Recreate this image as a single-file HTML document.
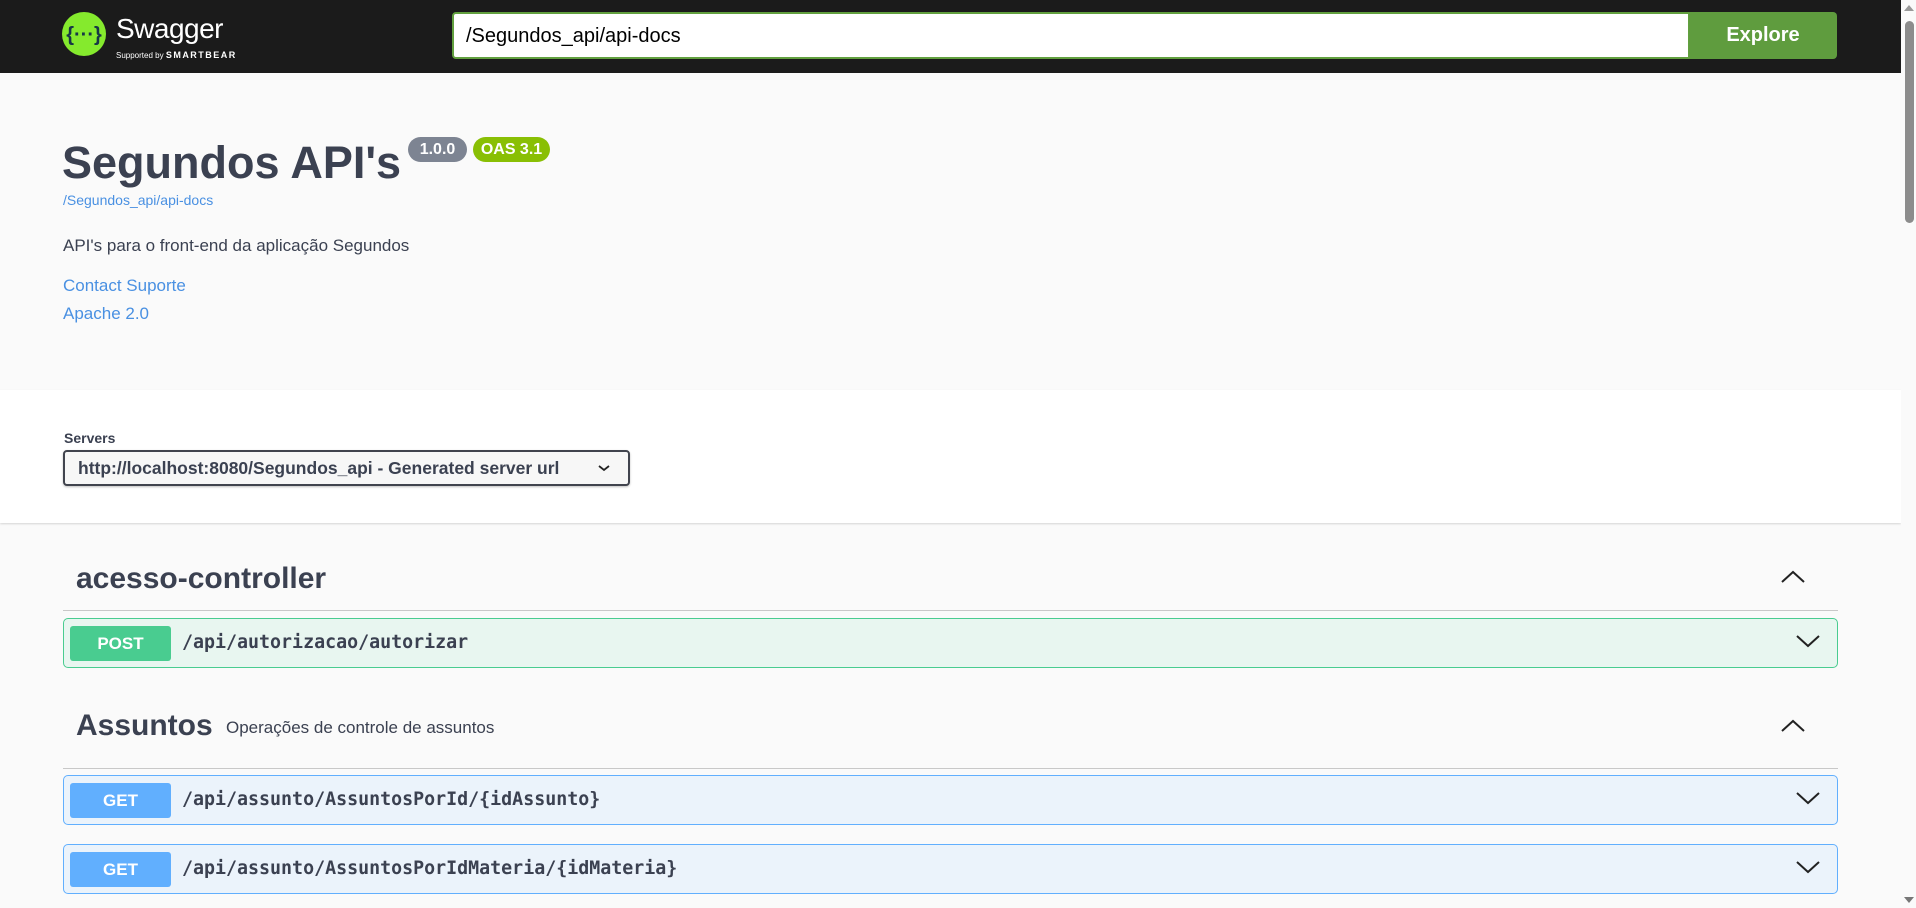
<!DOCTYPE html>
<html><head><meta charset="utf-8"><style>
*{box-sizing:border-box;margin:0;padding:0}
body{width:1916px;height:908px;overflow:hidden;background:#fafafa;font-family:"Liberation Sans",sans-serif;color:#3b4151;position:relative}
.hdr{position:absolute;left:0;top:0;width:1901px;height:73px;background:#1b1b1b}
.inp{position:absolute;left:452px;top:12px;width:1238px;height:47px;border:2px solid #62a03f;border-radius:4px 0 0 4px;background:#fff;font-size:20px;color:#000;padding:12px 12px;line-height:20px}
.btn{position:absolute;left:1689px;top:12px;width:148px;height:47px;background:#5f9c3e;border-radius:0 4px 4px 0;color:#fff;font-weight:bold;font-size:20px;text-align:center;line-height:47px}
.abs{position:absolute}
.info{position:absolute;left:0;top:73px;width:1901px;height:317px;background:#fafafa}
.srv{position:absolute;left:0;top:390px;width:1901px;height:133px;background:#fff;box-shadow:0 1px 2px rgba(0,0,0,.15)}
.a{color:#4990e2}
.badge{position:absolute;top:64px;height:25px;border-radius:13px;color:#fff;font-weight:bold;font-size:16px;line-height:25px;text-align:center}
.line{position:absolute;left:63px;width:1775px;height:1px;background:#c8c8c8}
.op{position:absolute;left:63px;width:1775px;height:50px;border-radius:5px;border:1px solid}
.m{position:absolute;left:6px;top:7px;width:101px;height:35px;border-radius:3px;color:#fff;font-weight:bold;font-size:17px;text-align:center;line-height:35px}
.p{position:absolute;left:118px;top:0;line-height:48px;font-family:"DejaVu Sans Mono","Liberation Mono",monospace;font-weight:bold;font-size:18.3px;color:#3b4151}
.chev{position:absolute;right:16px;top:15px}
h3{position:absolute;left:76px;font-size:30px;font-weight:bold;color:#3b4151}
</style></head><body>
<div class="hdr">
 <svg class="abs" style="left:62px;top:12px" width="44" height="44" viewBox="0 0 44 44"><circle cx="22" cy="22" r="22" fill="#85ea2d"/><text x="22" y="29" text-anchor="middle" font-family="Liberation Sans" font-size="20" font-weight="bold" fill="#173647">{···}</text></svg>
 <div class="abs" style="left:116px;top:13px;font-size:28px;color:#fff;letter-spacing:-0.5px">Swagger</div>
 <div class="abs" style="left:116px;top:50px;font-size:8px;color:#fff">Supported by <b style="font-size:9px;letter-spacing:1.5px">SMARTBEAR</b></div>
 <div class="inp">/Segundos_api/api-docs</div>
 <div class="btn">Explore</div>
</div>
<div class="info">
 <div class="abs" style="left:62px;top:64px;font-size:45px;font-weight:bold;color:#3b4151">Segundos API's</div>
 <div class="badge" style="left:408px;width:59px;background:#7d8492">1.0.0</div>
 <div class="badge" style="left:473px;width:77px;background:#89bf04">OAS 3.1</div>
 <div class="abs a" style="left:63px;top:119px;font-size:14px">/Segundos_api/api-docs</div>
 <div class="abs" style="left:63px;top:163px;font-size:17px">API's para o front-end da aplicação Segundos</div>
 <div class="abs a" style="left:63px;top:203px;font-size:17px">Contact Suporte</div>
 <div class="abs a" style="left:63px;top:231px;font-size:17px">Apache 2.0</div>
</div>
<div class="srv">
 <div class="abs" style="left:64px;top:40px;font-size:14px;font-weight:bold">Servers</div>
 <div class="abs" style="left:63px;top:60px;width:567px;height:36px;border:2px solid #41444e;border-radius:4px;background:#f7f7f7;box-shadow:0 1px 2px rgba(0,0,0,.25);font-size:17.5px;font-weight:bold;padding:0 0 0 13px;line-height:32px">http://localhost:8080/Segundos_api - Generated server url
  <svg class="abs" style="right:18px;top:11px" width="12" height="10" viewBox="0 0 12 10"><path d="M1 3l5 4 5-4" stroke="#222" stroke-width="1.8" fill="none"/></svg></div>
</div>
<h3 style="top:562px">acesso-controller</h3>
<svg class="abs" style="left:1780px;top:569px" width="26" height="15"><path d="M2 13L13 3l11 10" stroke="#222" stroke-width="2" fill="none"/></svg>
<div class="line" style="top:610px"></div>
<div class="op" style="top:618px;background:#e8f6f0;border-color:#49cc90"><div class="m" style="background:#49cc90">POST</div><div class="p">/api/autorizacao/autorizar</div>
 <svg class="chev" width="26" height="15"><path d="M2 2l11 10 11-10" stroke="#222" stroke-width="2" fill="none"/></svg></div>
<h3 style="top:709px">Assuntos</h3>
<div class="abs" style="left:226px;top:718px;font-size:17px">Operações de controle de assuntos</div>
<svg class="abs" style="left:1780px;top:718px" width="26" height="15"><path d="M2 13L13 3l11 10" stroke="#222" stroke-width="2" fill="none"/></svg>
<div class="line" style="top:768px"></div>
<div class="op" style="top:775px;background:#ebf3fb;border-color:#61affe"><div class="m" style="background:#61affe">GET</div><div class="p">/api/assunto/AssuntosPorId/{idAssunto}</div>
 <svg class="chev" width="26" height="15"><path d="M2 2l11 10 11-10" stroke="#222" stroke-width="2" fill="none"/></svg></div>
<div class="op" style="top:844px;background:#ebf3fb;border-color:#61affe"><div class="m" style="background:#61affe">GET</div><div class="p">/api/assunto/AssuntosPorIdMateria/{idMateria}</div>
 <svg class="chev" width="26" height="15"><path d="M2 2l11 10 11-10" stroke="#222" stroke-width="2" fill="none"/></svg></div>
<div class="abs" style="left:1901px;top:0;width:15px;height:908px;background:#fafafa">
 <svg class="abs" style="left:3px;top:4px" width="10" height="8"><path d="M0 7L5 1l5 6z" fill="#999"/></svg>
 <div class="abs" style="left:4px;top:21px;width:9px;height:202px;border-radius:5px;background:#8c8c8c"></div>
 <svg class="abs" style="left:3px;top:896px" width="10" height="8"><path d="M0 1L5 7l5-6z" fill="#777"/></svg>
</div>
</body></html>
